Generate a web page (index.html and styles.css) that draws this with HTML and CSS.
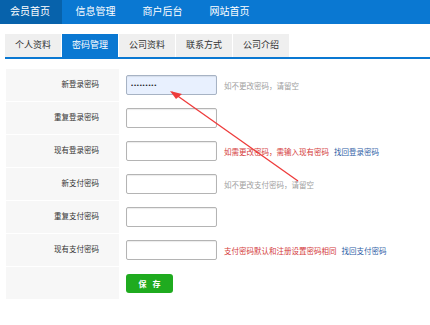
FILE: index.html
```html
<!DOCTYPE html>
<html lang="zh-CN">
  <head>
    <meta charset="UTF-8" />
    <meta name="viewport" content="width=device-width, initial-scale=1.0" />
    <title>密码管理</title>
    <link rel="stylesheet" href="styles.css">
  </head>
  <body>
    <div class="topnav">
      <a href="#" class="cur">会员首页</a>
      <a href="#">信息管理</a>
      <a href="#">商户后台</a>
      <a href="#">网站首页</a>
    </div>

    <div class="tabs">
      <a href="#">个人资料</a>
      <a href="#" class="on">密码管理</a>
      <a href="#">公司资料</a>
      <a href="#">联系方式</a>
      <a href="#">公司介绍</a>
    </div>

    <form class="pwd-form" onsubmit="return false">
      <div class="row">
        <label class="name">新登录密码</label>
        <div class="field">
          <input type="password" class="txt filled" value="123456789" />
          <span class="tip">如不更改密码，请留空</span>
        </div>
      </div>
      <div class="row">
        <label class="name">重复登录密码</label>
        <div class="field"><input type="password" class="txt" /></div>
      </div>
      <div class="row">
        <label class="name">现有登录密码</label>
        <div class="field">
          <input type="password" class="txt" />
          <span class="tip red">如需更改密码，需输入现有密码</span>
          <a href="#" class="link">找回登录密码</a>
        </div>
      </div>
      <div class="row">
        <label class="name">新支付密码</label>
        <div class="field">
          <input type="password" class="txt" />
          <span class="tip">如不更改支付密码，请留空</span>
        </div>
      </div>
      <div class="row">
        <label class="name">重复支付密码</label>
        <div class="field"><input type="password" class="txt" /></div>
      </div>
      <div class="row">
        <label class="name">现有支付密码</label>
        <div class="field">
          <input type="password" class="txt" />
          <span class="tip red">支付密码默认和注册设置密码相同</span>
          <a href="#" class="link">找回支付密码</a>
        </div>
      </div>
      <div class="row">
        <label class="name"></label>
        <div class="field"><button type="submit" class="btn-save">保 存</button></div>
      </div>
    </form>

    <!-- annotation arrow drawn over the form -->
    <svg class="mark" width="430" height="325" viewBox="0 0 430 325">
      <line x1="298" y1="181" x2="172" y2="92" stroke="#ee3b3b" stroke-width="1.3" />
      <path d="M170 91 L182 94 L176 99 Z" fill="#ee3b3b" />
    </svg>
  </body>
</html>
```

FILE: styles.css
```css
body {
  margin: 0;
  padding: 0;
  font-family: "Liberation Sans", "Noto Sans CJK SC", sans-serif;
  background-color: #fff;
  position: relative;
  width: 430px;
  height: 325px;
  overflow: hidden;
}

a {
  text-decoration: none;
}

.topnav {
  display: flex;
  height: 24px;
  background-color: #0a78d2;
}

.topnav a {
  padding: 0 13.5px;
  line-height: 24px;
  font-size: 10px;
  color: #fff;
}

.topnav a.cur {
  padding: 0 12px 0 10px;
  background-color: #0762ab;
}

.tabs {
  display: flex;
  margin: 10px 0 0 5px;
  border-bottom: 2px solid #0a78d2;
}

.tabs a {
  width: 56px;
  height: 23px;
  line-height: 23px;
  margin-right: 1px;
  text-align: center;
  font-size: 9px;
  color: #333;
  background-color: #efefef;
}

.tabs a.on {
  background-color: #0a78d2;
  color: #fff;
}

.pwd-form {
  margin: 10px 0 0 6px;
}

.row {
  display: flex;
  height: 32px;
  border-bottom: 1px solid #fff;
}

.row .name {
  width: 93px;
  padding-right: 20px;
  background-color: #f7f7f7;
  text-align: right;
  font-size: 7.5px;
  line-height: 32px;
  color: #333;
}

.row .field {
  display: flex;
  align-items: center;
  padding-left: 7px;
  font-size: 7.5px;
}

.txt {
  box-sizing: border-box;
  width: 91px;
  height: 20px;
  margin: 0;
  padding: 0 4px;
  border: 1px solid #b4b4b4;
  border-radius: 2px;
  box-shadow: inset 0 1px 1px rgba(0, 0, 0, 0.08);
  font-size: 6px;
  letter-spacing: 0.8px;
  color: #222;
  background-color: #fff;
}

.txt.filled {
  background-color: #e8f0fe;
  border-color: #a7b3c4;
}

.tip {
  margin-left: 7px;
  color: #a0a0a0;
}

.tip.red {
  color: #d43a3a;
}

.link {
  margin-left: 5px;
  color: #2f60a6;
}

.btn-save {
  width: 47px;
  height: 19px;
  padding: 0 0 0 2px;
  border: none;
  border-radius: 3px;
  background-color: #1fab1f;
  color: #fff;
  font-family: inherit;
  font-size: 8px;
  font-weight: bold;
  letter-spacing: 2px;
  cursor: pointer;
}

.mark {
  position: absolute;
  left: 0;
  top: 0;
  pointer-events: none;
}
```
